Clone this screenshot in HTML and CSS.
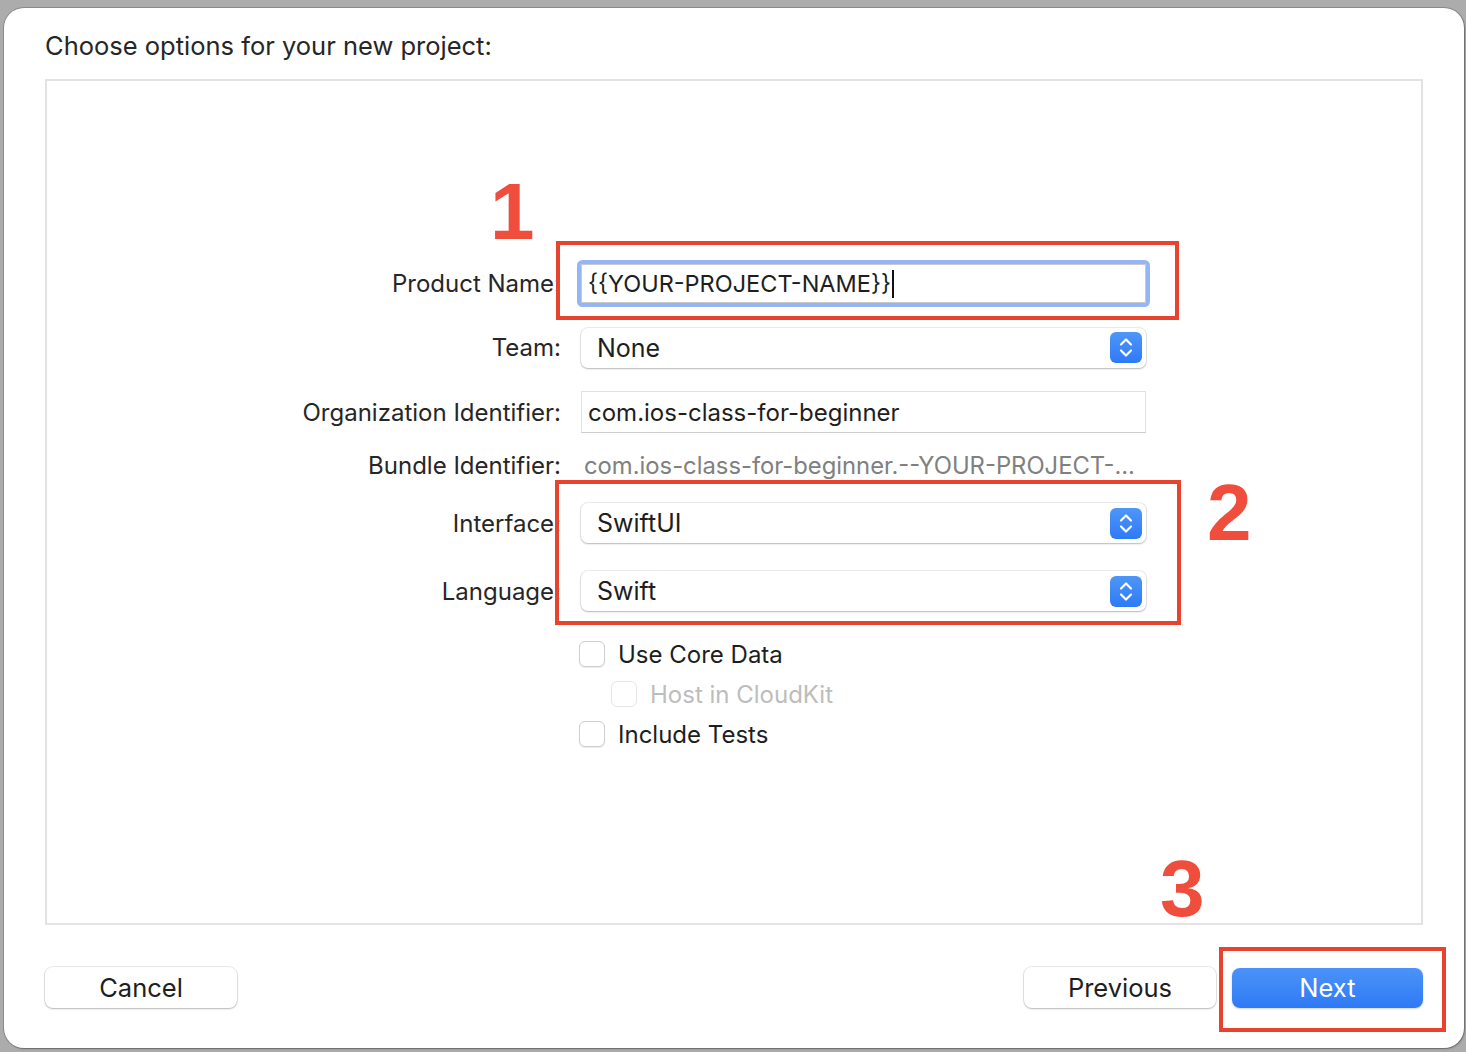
FILE: index.html
```html
<!DOCTYPE html>
<html>
<head>
<meta charset="utf-8">
<link rel="stylesheet" href="styles.css">
</head>
<body>
<div class="window">
  <h1 class="title">Choose options for your new project:</h1>
  <div class="panel">
    <div class="form">
      <div class="row r-product">
        <div class="label">Product Name:</div>
        <div class="field focus">{{YOUR-PROJECT-NAME}}<span class="caret"></span></div>
      </div>
      <div class="row r-team">
        <div class="label">Team:</div>
        <div class="popup"><span class="popup-text">None</span><span class="stepper"><svg viewBox="0 0 32 31" width="32" height="31"><path d="M11 12.5 L16 7.5 L21 12.5 M11 18.5 L16 23.5 L21 18.5" fill="none" stroke="#fff" stroke-width="2.2" stroke-linecap="round" stroke-linejoin="round"/></svg></span></div>
      </div>
      <div class="row r-org">
        <div class="label">Organization Identifier:</div>
        <div class="field plain">com.ios-class-for-beginner</div>
      </div>
      <div class="row r-bundle">
        <div class="label">Bundle Identifier:</div>
        <div class="bundle">com.ios-class-for-beginner.--YOUR-PROJECT-...</div>
      </div>
      <div class="row r-iface">
        <div class="label">Interface:</div>
        <div class="popup"><span class="popup-text">SwiftUI</span><span class="stepper"><svg viewBox="0 0 32 31" width="32" height="31"><path d="M11 12.5 L16 7.5 L21 12.5 M11 18.5 L16 23.5 L21 18.5" fill="none" stroke="#fff" stroke-width="2.2" stroke-linecap="round" stroke-linejoin="round"/></svg></span></div>
      </div>
      <div class="row r-lang">
        <div class="label">Language:</div>
        <div class="popup"><span class="popup-text">Swift</span><span class="stepper"><svg viewBox="0 0 32 31" width="32" height="31"><path d="M11 12.5 L16 7.5 L21 12.5 M11 18.5 L16 23.5 L21 18.5" fill="none" stroke="#fff" stroke-width="2.2" stroke-linecap="round" stroke-linejoin="round"/></svg></span></div>
      </div>
      <div class="check r-core"><span class="box"></span><span>Use Core Data</span></div>
      <div class="check sub disabled"><span class="box"></span><span>Host in CloudKit</span></div>
      <div class="check r-tests"><span class="box"></span><span>Include Tests</span></div>
    </div>
  </div>
  <div class="buttons">
    <button class="btn">Cancel</button>
    <div class="spacer"></div>
    <button class="btn">Previous</button>
    <button class="btn primary">Next</button>
  </div>

  <div class="mark m1"></div>
  <div class="mark m2"></div>
  <div class="mark m3"></div>
  <div class="num n1">1</div>
  <div class="num n2">2</div>
  <div class="num n3">3</div>
</div>
</body>
</html>
```

FILE: styles.css
```css
html, body {
  margin: 0;
  padding: 0;
}
body {
  background: #acacac;
  font-family: Inter, "Noto Sans", "Liberation Sans", sans-serif;
  color: #262626;
  width: 1466px;
  height: 1052px;
  overflow: hidden;
}
.window {
  position: relative;
  box-sizing: border-box;
  margin: 8px 2px 0 4px;
  width: 1460px;
  height: 1040px;
  background: #fff;
  border-radius: 20px;
  box-shadow: 0 0 0 1px rgba(0,0,0,0.18), 1px 1px 2px rgba(0,0,0,0.25);
  padding: 22px 41px 40px 41px;
  display: flex;
  flex-direction: column;
}
.title {
  margin: 0;
  font-weight: 400;
  font-size: 25.5px;
  line-height: 31px;
  color: #262626;
  height: 49px;
}
.panel {
  box-sizing: border-box;
  height: 846px;
  border: 2px solid #e3e3e3;
  padding-top: 183px;
}
.form {
  display: flex;
  flex-direction: column;
}
.row {
  display: flex;
  align-items: center;
  gap: 20px;
}
.label {
  width: 514px;
  text-align: right;
  font-size: 24px;
  color: #262626;
  flex: none;
}
.field {
  box-sizing: border-box;
  width: 565px;
  display: flex;
  align-items: center;
  padding-left: 6px;
  font-size: 24px;
  color: #1e1e1e;
}
.field.focus {
  height: 39px;
  border: 1px solid #c9c9c9;
  border-radius: 2px;
  box-shadow: 0 0 0 4px #94b5f6;
  font-size: 23.5px;
}
.caret {
  display: inline-block;
  width: 2px;
  height: 28px;
  background: #111;
  margin-left: 1px;
}
.field.plain {
  height: 42px;
  border: 1px solid #e2e2e2;
  border-bottom-color: #cdcdcd;
}
.bundle {
  padding-left: 3px;
  font-size: 23.8px;
  color: #808080;
}
.popup {
  box-sizing: border-box;
  width: 565px;
  height: 40px;
  display: flex;
  align-items: center;
  justify-content: space-between;
  padding: 0 4px 0 16px;
  background: #fff;
  border-radius: 7px;
  box-shadow: 0 0 0 1px rgba(0,0,0,0.07), 0 1px 2px rgba(0,0,0,0.22);
  font-size: 25px;
  color: #1e1e1e;
}
.stepper {
  width: 32px;
  height: 31px;
  border-radius: 6px;
  background: linear-gradient(#4f96f8, #2d7af6);
  display: flex;
}
.r-product { margin-top: 0; height: 39px; }
.r-team { margin-top: 25px; height: 39px; }
.r-org { margin-top: 24px; height: 42px; }
.r-bundle { margin-top: 19px; height: 26px; }
.r-iface { margin-top: 25px; height: 40px; }
.r-lang { margin-top: 28px; height: 40px; }
.check {
  display: flex;
  align-items: center;
  gap: 13px;
  margin-left: 532px;
  height: 26px;
  margin-top: 14px;
  font-size: 24px;
  color: #1e1e1e;
}
.check.r-core { margin-top: 30px; }
.check.sub { margin-left: 564px; }
.check.disabled { color: #bdbdbd; }
.box {
  box-sizing: border-box;
  width: 26px;
  height: 26px;
  border-radius: 6px;
  border: 1px solid #cfcfcf;
  box-shadow: 0 1px 1px rgba(0,0,0,0.08);
  background: #fff;
}
.check.disabled .box {
  border-color: #e6e6e6;
  box-shadow: none;
}
.buttons {
  margin-top: 42px;
  display: flex;
  align-items: center;
  gap: 16px;
}
.spacer { flex: 1; }
.btn {
  box-sizing: border-box;
  width: 192px;
  height: 41px;
  border: none;
  border-radius: 8px;
  background: #fff;
  box-shadow: 0 0 0 1px rgba(0,0,0,0.08), 0 1px 2px rgba(0,0,0,0.22);
  font-family: Inter, "Noto Sans", "Liberation Sans", sans-serif;
  font-size: 25.5px;
  color: #1e1e1e;
  padding: 0;
}
.btn.primary {
  height: 40px;
  width: 191px;
  background: linear-gradient(#4b93f8, #2e7af5);
  color: #fff;
  box-shadow: 0 1px 2px rgba(0,0,0,0.18);
}
.mark {
  position: absolute;
  box-sizing: border-box;
  border: 4px solid #e8432f;
}
.m1 { left: 552px; top: 233px; width: 623px; height: 79px; }
.m2 { left: 551px; top: 472px; width: 626px; height: 145px; }
.m3 { left: 1215px; top: 939px; width: 227px; height: 85px; }
.num {
  position: absolute;
  font-family: "Liberation Sans", Arial, sans-serif;
  font-weight: 700;
  font-size: 80px;
  line-height: 80px;
  color: #ef4e3d;
}
.n1 { left: 486px; top: 164px; }
.n2 { left: 1203px; top: 465px; }
.n3 { left: 1156px; top: 841px; }
```
